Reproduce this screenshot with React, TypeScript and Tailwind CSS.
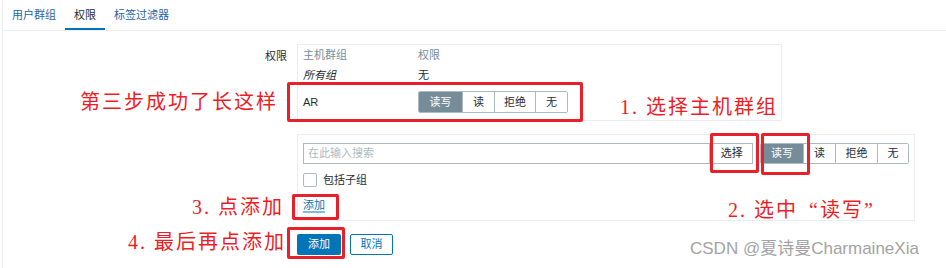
import React from 'react';

const ui = "font-['Liberation_Sans','Noto_Sans_CJK_SC',sans-serif]";
const note = "font-['Liberation_Serif','Noto_Sans_CJK_SC',serif] text-[#ee1c25] text-[20px] leading-none tracking-[2px] whitespace-nowrap";

type Perm = { label: string; w: string; active?: boolean };

const permsA: Perm[] = [
  { label: '读写', w: 'w-[43px]', active: true },
  { label: '读', w: 'w-[32px]' },
  { label: '拒绝', w: 'w-[41px]' },
  { label: '无', w: 'w-[32px]' },
];

const permsB: Perm[] = [
  { label: '读写', w: 'w-[42px]', active: true },
  { label: '读', w: 'w-[32px]' },
  { label: '拒绝', w: 'w-[42px]' },
  { label: '无', w: 'w-[31px]' },
];

const PermGroup = ({ items, h }: { items: Perm[]; h: string }) => (
  <div className={`flex ${h} border border-[#acbbc2] rounded-[2px] overflow-hidden`}>
    {items.map((p, i) => (
      <div
        key={p.label}
        className={`${p.w} flex items-center justify-center ${i > 0 ? 'border-l border-[#acbbc2]' : ''} ${
          p.active ? 'bg-[#768d99] text-white' : 'bg-white text-[#1f2c33]'
        }`}
      >
        {p.label}
      </div>
    ))}
  </div>
);

const RedBox = ({ cls }: { cls: string }) => (
  <div className={`absolute border-[3px] border-[#e8202a] rounded-[2px] ${cls}`} />
);

export default function App() {
  return (
    <div className={`relative w-[946px] h-[268px] overflow-hidden bg-white text-[11px] text-[#1f2c33] ${ui}`}>
      <div className="ml-[2px] h-full border-l border-[#ebeef0]">
        {/* tabs */}
        <div className="flex h-[31px] border-b border-[#ebeef0]">
          <div className="h-[30px] px-[9px] flex items-center text-[#1f65a6]">用户群组</div>
          <div className="h-[30px] px-[9px] flex items-center border-b-2 border-[#0275b8] pt-[2px]">权限</div>
          <div className="h-[30px] px-[9px] flex items-center text-[#1f65a6]">标签过滤器</div>
        </div>

        {/* permissions row */}
        <div className="flex mt-[13px]">
          <div className="w-[284px] shrink-0 text-right pt-[4px]">权限</div>
          <div className="ml-[10px]">
            <div className="w-[485px] border border-[#ebeef0] px-[5px]">
              <div className="flex h-[21px] items-center text-[#768d99]">
                <div className="w-[115px]">主机群组</div>
                <div>权限</div>
              </div>
              <div className="flex h-[19px] items-center">
                <div className="w-[115px] italic">所有组</div>
                <div>无</div>
              </div>
              <div className="flex items-center pt-[6px] pb-[7px]">
                <div className="w-[115px]">AR</div>
                <PermGroup items={permsA} h="h-[22px]" />
              </div>
            </div>

            <div className="mt-[13px] w-[618px] border border-[#ebeef0] px-[5px] pt-[8px] pb-[8px]">
              <div className="flex items-center">
                <div className="w-[410px] h-[21px] border border-[#acbbc2] flex items-center px-[4px] text-[#acbbc2]">
                  在此输入搜索
                </div>
                <div className="w-[43px] h-[21px] border border-[#acbbc2] flex items-center justify-center bg-white">
                  选择
                </div>
                <div className="ml-[7px]">
                  <PermGroup items={permsB} h="h-[21px]" />
                </div>
              </div>
              <div className="flex items-center mt-[8px]">
                <div className="w-[14px] h-[14px] border border-[#acbbc2] rounded-[2px]" />
                <span className="ml-[6px]">包括子组</span>
              </div>
              <div className="mt-[9px] leading-[14px]">
                <span className="text-[#0275b8] border-b-2 border-[#7fbbe0]">添加</span>
              </div>
            </div>

            <div className="flex gap-[9px] mt-[13px]">
              <div className="w-[44px] h-[21px] bg-[#0275b8] text-white rounded-[2px] flex items-center justify-center">
                添加
              </div>
              <div className="w-[43px] h-[21px] border border-[#0275b8] text-[#0275b8] rounded-[2px] flex items-center justify-center">
                取消
              </div>
            </div>
          </div>
        </div>
      </div>

      {/* annotations */}
      <RedBox cls="left-[287px] top-[82px] w-[296px] h-[40px]" />
      <RedBox cls="left-[710px] top-[133px] w-[49px] h-[40px]" />
      <RedBox cls="left-[761px] top-[133px] w-[49px] h-[42px]" />
      <RedBox cls="left-[292px] top-[194px] w-[47px] h-[26px]" />
      <RedBox cls="left-[287px] top-[227px] w-[58px] h-[32px]" />

      <div className={`absolute left-[80px] top-[92px] ${note}`}>第三步成功了长这样</div>
      <div className={`absolute left-[620px] top-[97px] ${note}`}>1. 选择主机群组</div>
      <div className={`absolute left-[728px] top-[200px] ${note}`}>
        2. 选中<span className="inline-block w-[22px] text-right">“</span>读写<span className="inline-block w-[16px]">”</span>
      </div>
      <div className={`absolute left-[192px] top-[197px] ${note}`}>3. 点添加</div>
      <div className={`absolute left-[128px] top-[232px] ${note}`}>4. 最后再点添加</div>

      <div className="absolute left-[690px] top-[240px] text-[17px] leading-none text-[#a3a3a3] font-['Liberation_Sans','Noto_Sans_CJK_SC',sans-serif] whitespace-nowrap">
        CSDN @夏诗曼CharmaineXia
      </div>
    </div>
  );
}
